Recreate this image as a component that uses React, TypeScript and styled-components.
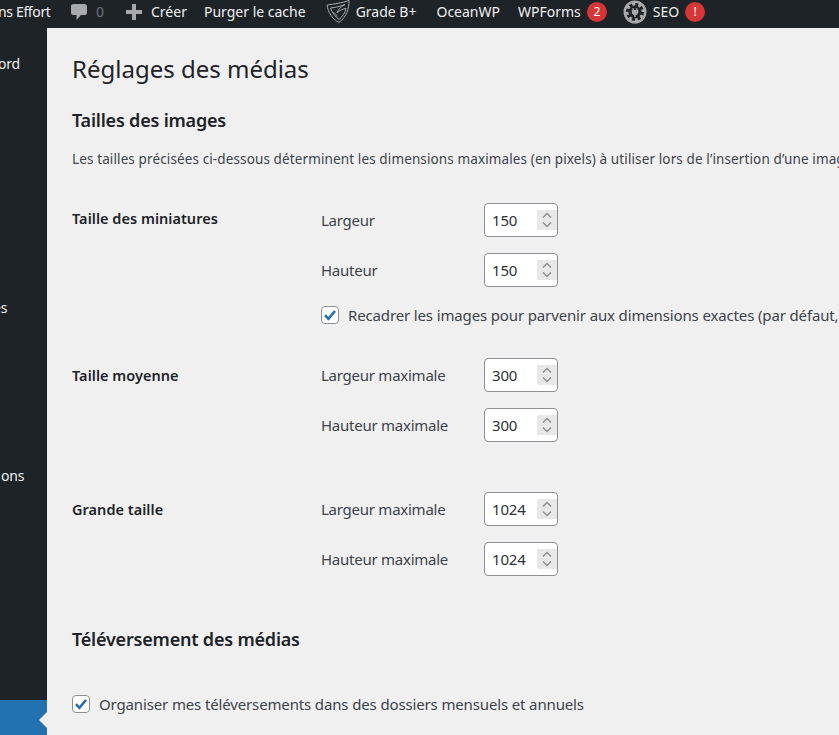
import React from "react";
import styled, { createGlobalStyle } from "styled-components";

const Global = createGlobalStyle`
  html, body {
    margin: 0;
    padding: 0;
    height: 735px;
    overflow: hidden;
    background: #f0f0f1;
  }
  body {
    font-family: "Noto Sans", "Open Sans", sans-serif;
  }
`;

const Page = styled.div`
  width: 839px;
  height: 735px;
  overflow: hidden;
  display: flex;
  flex-direction: column;
`;

const AdminBar = styled.div`
  height: 28px;
  box-sizing: border-box;
  padding-bottom: 5px;
  flex: none;
  background: #1d2327;
  display: flex;
  align-items: center;
  color: #f0f0f1;
  font-size: 14px;
  white-space: nowrap;
  overflow: hidden;
`;

const BarItem = styled.span<{ $left: number }>`
  display: inline-flex;
  align-items: center;
  margin-left: ${(p) => p.$left}px;
  flex: none;
`;

const FirstItem = styled.span`
  margin-left: -2px;
  width: 53px;
  flex: none;
  letter-spacing: -0.35px;
`;

const MutedCount = styled.span`
  color: #6d7378;
  margin-left: 7px;
`;

const IconSlot = styled.span<{ $gap: number }>`
  display: inline-flex;
  margin-right: ${(p) => p.$gap}px;
`;

const Bubble = styled.span`
  width: 20px;
  height: 20px;
  border-radius: 50%;
  background: #d63638;
  color: #fff;
  font-size: 12px;
  display: inline-flex;
  align-items: center;
  justify-content: center;
  margin-left: 6px;
`;

const Body = styled.div`
  flex: 1;
  display: flex;
  min-height: 0;
`;

const SideMenu = styled.div`
  width: 47px;
  flex: none;
  background: #1d2327;
  color: #f0f0f1;
  font-size: 14px;
  display: flex;
  flex-direction: column;
  overflow: hidden;
`;

const SideLabel = styled.div<{ $top: number; $shift: number }>`
  margin-top: ${(p) => p.$top}px;
  margin-left: ${(p) => p.$shift}px;
  height: 20px;
  line-height: 20px;
  letter-spacing: -0.2px;
  white-space: nowrap;
`;

const SideCurrent = styled.div`
  margin-top: auto;
  height: 35px;
  background: #2271b1;
  position: relative;
  &::after {
    content: "";
    position: absolute;
    right: 0;
    top: 12px;
    border: 8px solid transparent;
    border-right-color: #f0f0f1;
  }
`;

const Main = styled.main`
  flex: 1;
  min-width: 0;
  padding: 0 0 0 25px;
  color: #3c434a;
  font-size: 14px;
  letter-spacing: -0.25px;
  overflow: hidden;
`;

const Title = styled.h1`
  margin: 0;
  padding-top: 23px;
  height: 59px;
  box-sizing: border-box;
  font-size: 24px;
  font-weight: 400;
  line-height: 35px;
  color: #1d2327;
  letter-spacing: 0;
`;

const SectionTitle = styled.h2<{ $top?: number }>`
  margin: ${(p) => p.$top ?? 0}px 0 0;
  font-size: 18px;
  line-height: 26px;
  font-weight: 600;
  color: #1d2327;
  letter-spacing: -0.2px;
`;

const Intro = styled.p`
  margin: 14px 0 0;
  height: 24px;
  line-height: 24px;
  white-space: nowrap;
  font-size: 13.5px;
  letter-spacing: 0.12px;
`;

const SizeGroup = styled.section<{ $top: number }>`
  display: grid;
  grid-template-columns: 249px 1fr;
  margin-top: ${(p) => p.$top}px;
`;

const GroupLabel = styled.div<{ $top: number }>`
  font-weight: 600;
  color: #1d2327;
  line-height: 24px;
  margin-top: ${(p) => p.$top}px;
  font-size: 14.5px;
  letter-spacing: 0.03px;
`;

const Fields = styled.div`
  display: flex;
  flex-direction: column;
  gap: 16px;
`;

const FieldRow = styled.div`
  display: grid;
  grid-template-columns: 163px 74px;
  align-items: center;
  height: 34px;
  font-size: 15px;
`;

const SpinBox = styled.div`
  box-sizing: border-box;
  width: 74px;
  height: 34px;
  background: #fff;
  border: 1px solid #8c8f94;
  border-radius: 4px;
  display: flex;
  align-items: center;
  justify-content: space-between;
  padding: 0 0 0 7px;
  color: #2c3338;
  font-size: 15px;
  letter-spacing: -0.2px;
`;

const Spinner = styled.span`
  width: 20px;
  height: 20px;
  background: #e8e8e8;
  display: inline-flex;
`;

const CheckRow = styled.label<{ $top?: number }>`
  display: flex;
  align-items: center;
  gap: 9px;
  margin-top: ${(p) => p.$top ?? 0}px;
  white-space: nowrap;
  font-size: 15px;
  letter-spacing: -0.14px;
  height: 24px;
`;

const CheckBox = styled.span`
  box-sizing: border-box;
  width: 18px;
  height: 18px;
  flex: none;
  background: #fff;
  border: 1px solid #8c8f94;
  border-radius: 4px;
  display: inline-flex;
  align-items: center;
  justify-content: center;
`;

const NumberInput = ({ value }: { value: string }) => (
  <SpinBox>
    {value}
    <Spinner>
      <svg width="20" height="20" viewBox="0 0 20 20" fill="none" stroke="#8d8d8d" strokeWidth="1.4">
        <path d="M6 7.500 10 3.500l4 4" />
        <path d="M6 12.500l4 4 4-4" />
      </svg>
    </Spinner>
  </SpinBox>
);

const Field = ({ label, value }: { label: string; value: string }) => (
  <FieldRow>
    <span>{label}</span>
    <NumberInput value={value} />
  </FieldRow>
);

const Check = () => (
  <CheckBox>
    <svg width="14" height="14" viewBox="0 0 14 14" fill="none" stroke="#2271b1" strokeWidth="2.6">
      <path d="M2 7.200 5.400 10.800 12 3" />
    </svg>
  </CheckBox>
);

const CommentIcon = () => (
  <svg width="20" height="20" viewBox="0 0 20 20" fill="#a7aaad">
    <path d="M4.500 2h11A2.500 2.500 0 0 1 18 4.500v6A2.500 2.500 0 0 1 15.500 13H12l-4.500 5v-5h-3A2.500 2.500 0 0 1 2 10.500v-6A2.500 2.500 0 0 1 4.500 2z" />
  </svg>
);

const PlusIcon = () => (
  <svg width="20" height="20" viewBox="0 0 20 20" fill="#a7aaad">
    <path d="M8 2h4v6h6v4h-6v6H8v-6H2V8h6z" />
  </svg>
);

const ShieldIcon = () => (
  <svg width="24" height="24" viewBox="0 0 24 24" fill="none" stroke="#a7aaad" strokeWidth="1">
    <path d="M1 5C8 4 16 3 23 .5c0 8-2 16-10 22C6 19 2 12 1 5z" />
    <path d="M4.500 8C9 7.500 14 6.500 19 4.500c-3 1.500-6.500 4-8 8.500 3-3 6.500-4.500 9-4.500-1 4.500-3.500 8-7 11-3.500-2.500-7-7-8.500-11.500z" />
    <path d="M7.500 12.500c2 1 3 2.500 3.500 4" />
  </svg>
);

const SeoIcon = () => (
  <svg width="24" height="24" viewBox="0 0 24 24">
    <circle cx="12" cy="12" r="11.500" fill="#a7aaad" />
    <circle cx="12" cy="12" r="6.500" fill="#1d2327" />
    <circle cx="12" cy="12" r="7.500" fill="none" stroke="#1d2327" strokeWidth="3" strokeDasharray="3 2.890" />
    <path d="M9.500 8h1.300v2h2.400V8h1.300v2h.8v2a3.300 3.300 0 0 1-2.600 3.200V17h-1.400v-1.800A3.300 3.300 0 0 1 8.700 12v-2h.8z" fill="#a7aaad" />
  </svg>
);

export default function App() {
  return (
    <Page>
      <Global />
      <AdminBar>
        <FirstItem>ns Effort</FirstItem>
        <BarItem $left={18}>
          <IconSlot $gap={0}>
            <CommentIcon />
          </IconSlot>
          <MutedCount>0</MutedCount>
        </BarItem>
        <BarItem $left={20}>
          <IconSlot $gap={7}>
            <PlusIcon />
          </IconSlot>
          Créer
        </BarItem>
        <BarItem $left={17}>Purger le cache</BarItem>
        <BarItem $left={20}>
          <IconSlot $gap={6}>
            <ShieldIcon />
          </IconSlot>
          Grade B+
        </BarItem>
        <BarItem $left={20}>OceanWP</BarItem>
        <BarItem $left={18}>
          WPForms
          <Bubble>2</Bubble>
        </BarItem>
        <BarItem $left={16}>
          <IconSlot $gap={6}>
            <SeoIcon />
          </IconSlot>
          SEO
          <Bubble>!</Bubble>
        </BarItem>
      </AdminBar>
      <Body>
        <SideMenu>
          <SideLabel $top={26} $shift={-2}>ord</SideLabel>
          <SideLabel $top={224} $shift={-7}>es</SideLabel>
          <SideLabel $top={148} $shift={1}>ons</SideLabel>
          <SideCurrent />
        </SideMenu>
        <Main>
          <Title>Réglages des médias</Title>
          <SectionTitle $top={20}>Tailles des images</SectionTitle>
          <Intro>
            Les tailles précisées ci-dessous déterminent les dimensions maximales (en pixels) à utiliser lors de
            l’insertion d’une image dans la bibliothèque de médias.
          </Intro>
          <SizeGroup $top={32}>
            <GroupLabel $top={3}>Taille des miniatures</GroupLabel>
            <Fields>
              <Field label="Largeur" value="150" />
              <Field label="Hauteur" value="150" />
              <CheckRow>
                <Check />
                Recadrer les images pour parvenir aux dimensions exactes (par défaut, les images sont proportionnelles)
              </CheckRow>
            </Fields>
          </SizeGroup>
          <SizeGroup $top={31}>
            <GroupLabel $top={5}>Taille moyenne</GroupLabel>
            <Fields>
              <Field label="Largeur maximale" value="300" />
              <Field label="Hauteur maximale" value="300" />
            </Fields>
          </SizeGroup>
          <SizeGroup $top={50}>
            <GroupLabel $top={5}>Grande taille</GroupLabel>
            <Fields>
              <Field label="Largeur maximale" value="1024" />
              <Field label="Hauteur maximale" value="1024" />
            </Fields>
          </SizeGroup>
          <SectionTitle $top={50}>Téléversement des médias</SectionTitle>
          <CheckRow $top={40}>
            <Check />
            Organiser mes téléversements dans des dossiers mensuels et annuels
          </CheckRow>
        </Main>
      </Body>
    </Page>
  );
}
